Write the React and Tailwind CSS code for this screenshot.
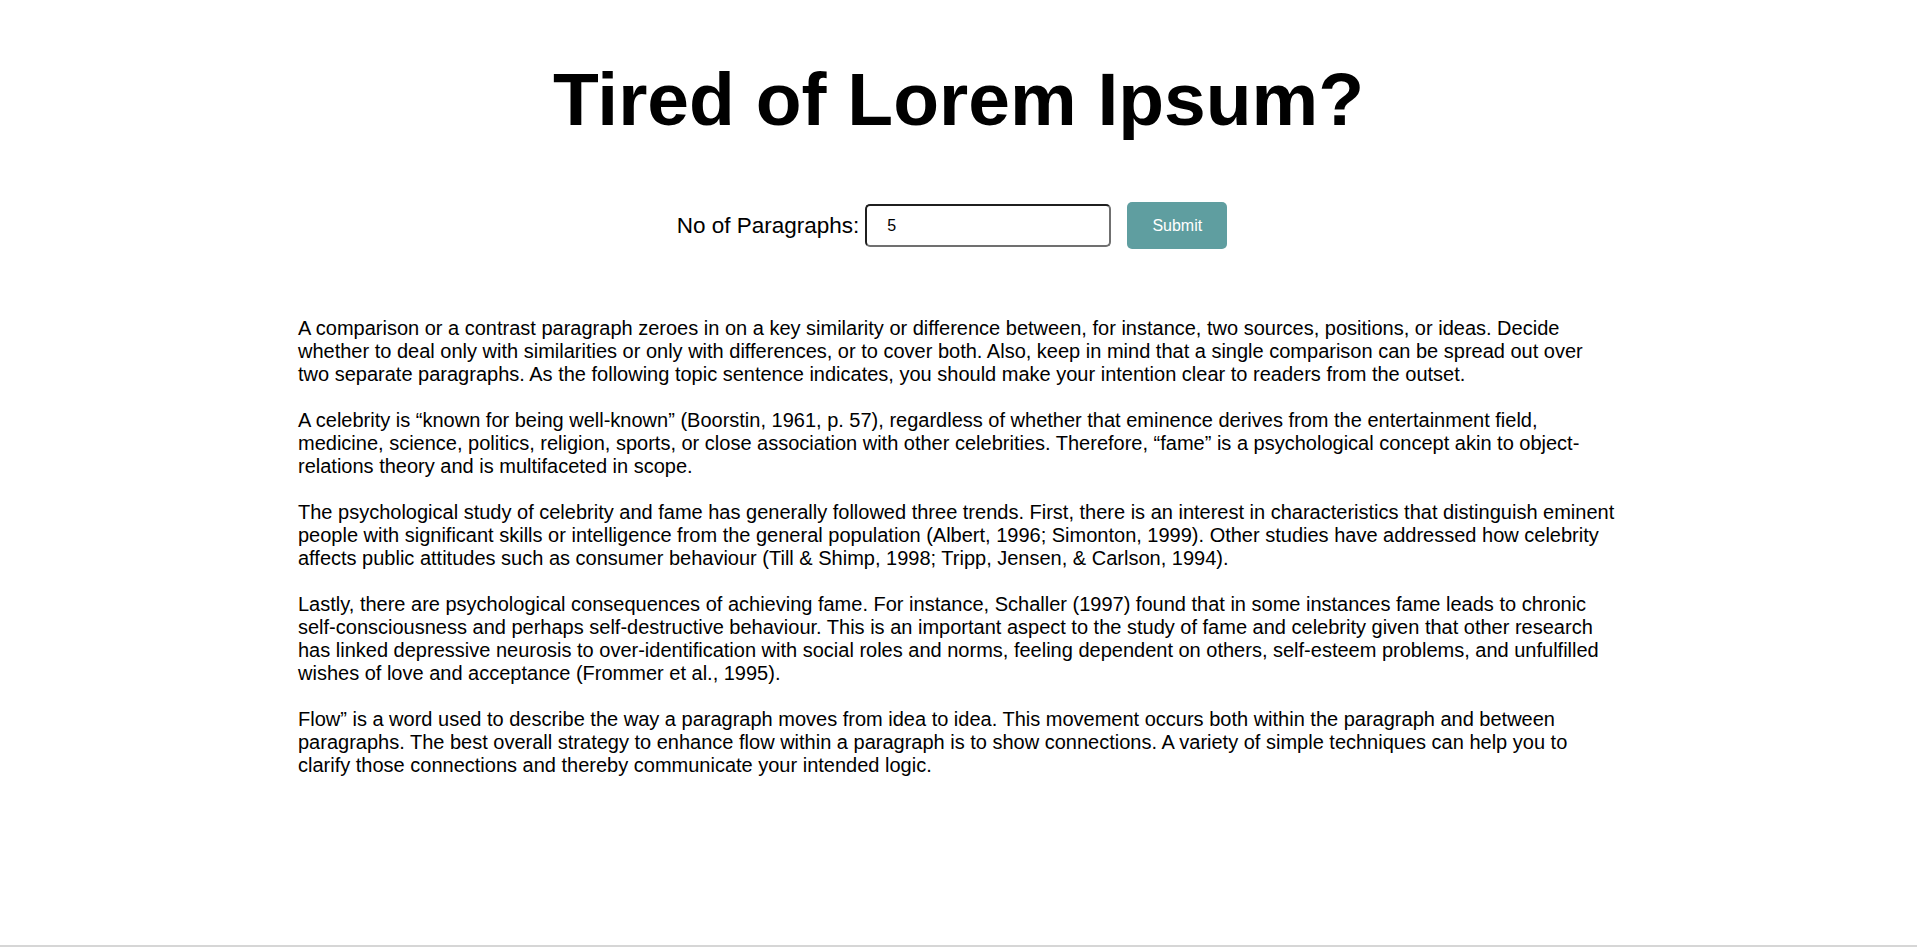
import React from "react";

const paragraphs = [
  "A comparison or a contrast paragraph zeroes in on a key similarity or difference between, for instance, two sources, positions, or ideas. Decide whether to deal only with similarities or only with differences, or to cover both. Also, keep in mind that a single comparison can be spread out over two separate paragraphs. As the following topic sentence indicates, you should make your intention clear to readers from the outset.",
  "A celebrity is \u201cknown for being well-known\u201d (Boorstin, 1961, p. 57), regardless of whether that eminence derives from the entertainment field, medicine, science, politics, religion, sports, or close association with other celebrities. Therefore, \u201cfame\u201d is a psychological concept akin to object-relations theory and is multifaceted in scope.",
  "The psychological study of celebrity and fame has generally followed three trends. First, there is an interest in characteristics that distinguish eminent people with significant skills or intelligence from the general population (Albert, 1996; Simonton, 1999). Other studies have addressed how celebrity affects public attitudes such as consumer behaviour (Till & Shimp, 1998; Tripp, Jensen, & Carlson, 1994).",
  "Lastly, there are psychological consequences of achieving fame. For instance, Schaller (1997) found that in some instances fame leads to chronic self-consciousness and perhaps self-destructive behaviour. This is an important aspect to the study of fame and celebrity given that other research has linked depressive neurosis to over-identification with social roles and norms, feeling dependent on others, self-esteem problems, and unfulfilled wishes of love and acceptance (Frommer et al., 1995).",
  "Flow\u201d is a word used to describe the way a paragraph moves from idea to idea. This movement occurs both within the paragraph and between paragraphs. The best overall strategy to enhance flow within a paragraph is to show connections. A variety of simple techniques can help you to clarify those connections and thereby communicate your intended logic.",
];

export default function App() {
  return (
    <div className="min-h-[947px] flex flex-col bg-white text-black font-['Liberation_Sans',Arial,sans-serif]">
      <div className="flex-1 flex flex-col items-center pt-[56px]">
        <h1 className="text-[75px] leading-[86px] font-bold text-center">
          Tired of Lorem Ipsum?
        </h1>
        <div className="flex items-center mt-[60px] pr-[13px]">
          <label className="text-[22.5px] leading-[26px] mr-[6px]">No of Paragraphs:</label>
          <input
            type="text"
            defaultValue="5"
            className="w-[246px] h-[43px] border-2 border-[#1f1f1f] border-r-[#707070] border-b-[#707070] rounded-[5px] pl-[20px] text-[16px] outline-none bg-white"
          />
          <button className="ml-[16px] w-[100px] h-[47px] bg-[#5f9ea0] text-white text-[16px] rounded-[5px]">
            Submit
          </button>
        </div>
        <div className="w-[1321px] mt-[68px] text-[20px] leading-[23px]">
          {paragraphs.map((p, i) => (
            <p key={i} className="mb-[23px]">
              {p}
            </p>
          ))}
        </div>
      </div>
      <div className="h-[2px] bg-[#d6d6d6]" />
    </div>
  );
}
